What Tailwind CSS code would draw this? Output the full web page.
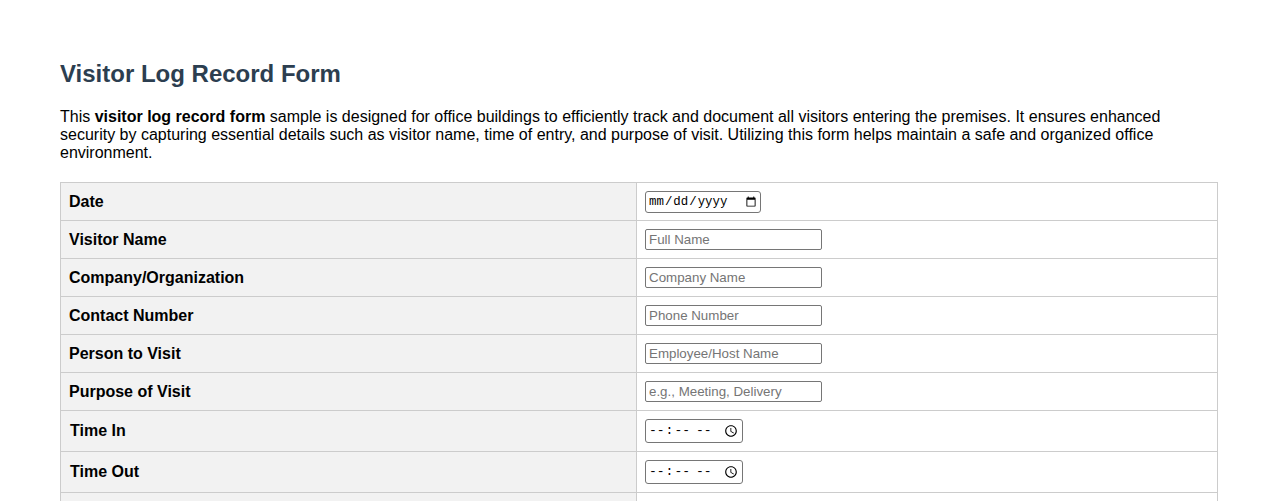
<!DOCTYPE html>
<html lang="en">
<head>
  <meta charset="UTF-8">
  <meta name="viewport" content="width=device-width, initial-scale=1.0">
  <title>Visitor Log Record Form</title>
  <script src="https://cdn.jsdelivr.net/npm/@tailwindcss/browser@4"></script>
</head>
<body class="h-[501px] overflow-hidden bg-white text-black font-['Liberation_Sans',Arial,sans-serif]">

  <div class="px-[60px] pt-[60px]">
    <!-- Header -->
    <h1 class="text-[24px] leading-[28px] font-bold text-[#2c3e50] mb-[20px]">Visitor Log Record Form</h1>

    <p class="text-[16px] leading-[18px] mb-[20px]">This <strong class="font-bold">visitor log record form</strong> sample is designed for office buildings to efficiently track and document all visitors entering the premises. It ensures enhanced security by capturing essential details such as visitor name, time of entry, and purpose of visit. Utilizing this form helps maintain a safe and organized office environment.</p>

    <!-- Form table -->
    <table class="w-full table-fixed border-collapse text-[16px]">
      <tbody>
        <tr class="h-[38px]">
          <th class="w-[576px] border border-[#ccc] bg-[#f2f2f2] px-2 text-left font-bold">Date</th>
          <td class="border border-[#ccc] px-2"><input type="date" class="block w-[116px] h-[22px] border border-[#767676] rounded-[3px] pl-[2px] pr-[1px] pt-[1px] font-['Liberation_Mono',monospace] text-[12.4px]"></td>
        </tr>
        <tr class="h-[38px]">
          <th class="border border-[#ccc] bg-[#f2f2f2] px-2 text-left font-bold">Visitor Name</th>
          <td class="border border-[#ccc] px-2"><input type="text" placeholder="Full Name" class="block w-[177px] h-[21px] border border-[#767676] rounded-[2px] px-[3px] text-[13.33px] placeholder:text-[#757575]"></td>
        </tr>
        <tr class="h-[38px]">
          <th class="border border-[#ccc] bg-[#f2f2f2] px-2 text-left font-bold">Company/Organization</th>
          <td class="border border-[#ccc] px-2"><input type="text" placeholder="Company Name" class="block w-[177px] h-[21px] border border-[#767676] rounded-[2px] px-[3px] text-[13.33px] placeholder:text-[#757575]"></td>
        </tr>
        <tr class="h-[38px]">
          <th class="border border-[#ccc] bg-[#f2f2f2] px-2 text-left font-bold">Contact Number</th>
          <td class="border border-[#ccc] px-2"><input type="text" placeholder="Phone Number" class="block w-[177px] h-[21px] border border-[#767676] rounded-[2px] px-[3px] text-[13.33px] placeholder:text-[#757575]"></td>
        </tr>
        <tr class="h-[38px]">
          <th class="border border-[#ccc] bg-[#f2f2f2] px-2 text-left font-bold">Person to Visit</th>
          <td class="border border-[#ccc] px-2"><input type="text" placeholder="Employee/Host Name" class="block w-[177px] h-[21px] border border-[#767676] rounded-[2px] px-[3px] text-[13.33px] placeholder:text-[#757575]"></td>
        </tr>
        <tr class="h-[38px]">
          <th class="border border-[#ccc] bg-[#f2f2f2] px-2 text-left font-bold">Purpose of Visit</th>
          <td class="border border-[#ccc] px-2"><input type="text" placeholder="e.g., Meeting, Delivery" class="block w-[177px] h-[21px] border border-[#767676] rounded-[2px] px-[3px] text-[13.33px] placeholder:text-[#757575]"></td>
        </tr>
        <tr class="h-[41px]">
          <th class="border border-[#ccc] bg-[#f2f2f2] pl-[9px] pr-2 text-left font-bold">Time In</th>
          <td class="border border-[#ccc] px-2"><input type="time" class="block w-[98px] h-[24px] border border-[#767676] rounded-[3px] pl-[2px] pr-[1px] font-['Liberation_Mono',monospace] text-[13px]"></td>
        </tr>
        <tr class="h-[41px]">
          <th class="border border-[#ccc] bg-[#f2f2f2] pl-[9px] pr-2 text-left font-bold">Time Out</th>
          <td class="border border-[#ccc] px-2"><input type="time" class="block w-[98px] h-[24px] border border-[#767676] rounded-[3px] pl-[2px] pr-[1px] font-['Liberation_Mono',monospace] text-[13px]"></td>
        </tr>
        <tr class="h-[38px]">
          <th class="border border-[#ccc] bg-[#f2f2f2] px-2"></th>
          <td class="border border-[#ccc] px-2"></td>
        </tr>
      </tbody>
    </table>
  </div>

</body>
</html>
